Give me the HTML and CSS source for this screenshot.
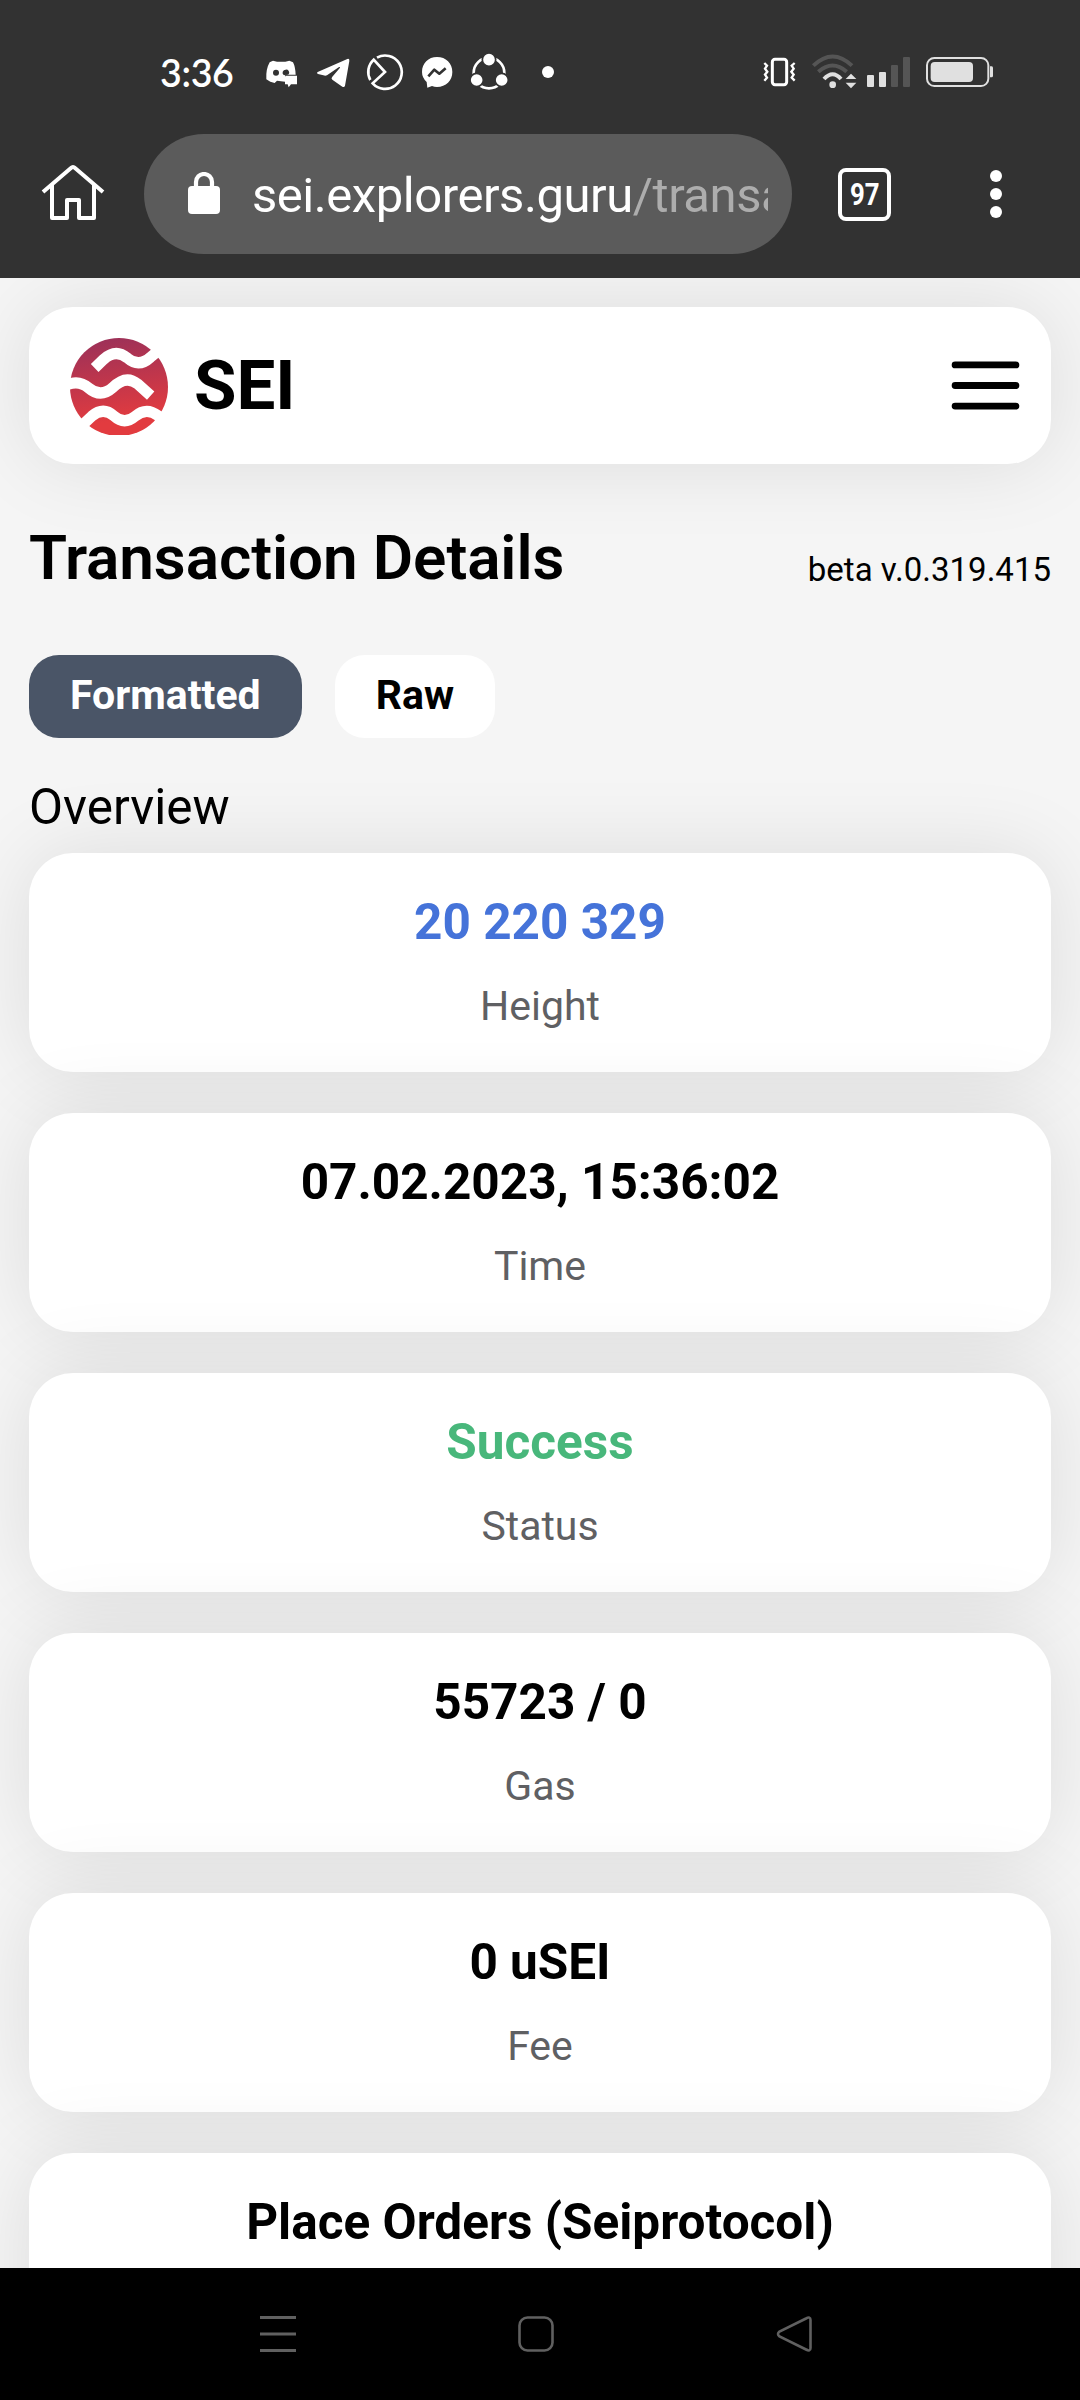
FILE: index.html
```html
<!DOCTYPE html>
<html lang="en">
<head>
<meta charset="utf-8">
<title>SEI - Transaction Details</title>
<link rel="stylesheet" href="styles.css">
</head>
<body>
<div class="screen">
  <div class="browser">
    <div class="status">
      <span class="clock">3:36</span>
      <svg class="sicon" viewBox="375 30 150 135"><path fill="#fff" fill-rule="evenodd" d="M399 62L411 65H436L448 62L459 67Q466 80 467 104H439Q435 104 435 108V125L411 122L404 129L391 125L379 118Q377 88 389 67ZM408 89A9 9 0 1 0 408 107A9 9 0 1 0 408 89ZM437 89A9 9 0 0 0 430 104L435 106L446 103A9 9 0 0 0 437 89Z"/><path fill="#fff" d="M439 107H471V133H453L446 142L443 133H435V111Q435 107 439 107Z"/></svg>
      <svg class="sicon" viewBox="525 30 150 135"><path fill="#fff" d="M533 96L622 57Q629 55 628 63L615 137Q613 143 607 140L577 119Q572 115 577 110L600 83Q601 79 596 82L561 106Q556 108 550 106L534 102Q528 99 533 96Z"/></svg>
      <svg class="sicon" viewBox="675 30 150 135"><g fill="none" stroke="#fff" stroke-width="8"><path d="M711 53A50 50 0 1 1 698 130L735 96L701 59A50 50 0 0 0 691 120"/></g></svg>
      <svg class="sicon" viewBox="825 30 150 135"><path fill="#fff" d="M891 51C865 51 846 70 846 96Q846 113 860 126L862 143L876 138Q883 141 891 141C918 141 937 122 937 96C937 70 918 51 891 51Z"/><path d="M865 109L883 89L898 101L917 85" fill="none" stroke="#323232" stroke-width="8" stroke-linejoin="round"/></svg>
      <svg class="sicon" viewBox="975 30 150 135"><circle cx="1047" cy="99" r="46" fill="none" stroke="#fff" stroke-width="8"/><g fill="#fff" stroke="#323232" stroke-width="5"><circle cx="1047" cy="59" r="20"/><circle cx="1010" cy="120" r="20"/><circle cx="1085" cy="120" r="20"/></g></svg>
      <svg class="sicon" viewBox="1125 30 150 135"><circle cx="1224" cy="96" r="18" fill="#fff"/></svg>
      <span class="spacer"></span>
      <svg class="sicon" viewBox="60 30 150 135"><g fill="none" stroke="#fff"><rect x="97" y="58" width="43" height="76" rx="8" stroke-width="9"/><path stroke-width="7" d="M73 69L81 77L75 86L82 95L75 104L81 113L73 122M164 69L155 77L161 86L154 95L161 104L155 113L164 122"/></g></svg>
      <svg class="sicon" viewBox="210 30 150 135"><g fill="none" stroke-width="12"><path stroke="#555" d="M220 77Q278 22 336 77M235 95Q278 58 320 95"/><path stroke="#e0e0e0" d="M252 117Q278 88 303 117"/></g><g fill="#e0e0e0"><circle cx="278" cy="134" r="10"/><path d="M317 117L333 101L349 117ZM317 128H349L333 145Z"/></g></svg>
      <svg class="signal" viewBox="360 30 180 135"><g fill="#e0e0e0"><rect x="381" y="105" width="21" height="36" rx="3"/><rect x="417" y="96" width="21" height="45" rx="3"/><g fill="#555"><rect x="453" y="75" width="21" height="66" rx="3"/><rect x="489" y="51" width="21" height="90" rx="3"/></g></g></svg>
      <svg class="battery" viewBox="540 30 240 135"><rect x="561" y="54" width="184" height="84" rx="22" fill="none" stroke="#e0e0e0" stroke-width="6"/><rect x="572" y="66" width="127" height="60" rx="12" fill="#e0e0e0"/><path d="M750 79H755Q759 79 759 84V107Q759 112 755 112H750Z" fill="#e0e0e0"/></svg>
    </div>
    <div class="toolbar">
      <svg class="home" viewBox="0 0 64 60"><g fill="none" stroke="#fff" stroke-width="4" stroke-linejoin="round"><path d="M2 28L30 4Q32 2 34 4L62 28"/><path d="M11 21V54H26V36H38V54H53V21"/></g></svg>
      <div class="address">
        <svg class="lock" viewBox="0 0 32 42"><rect y="14" width="32" height="28" rx="4" fill="#fff"/><path d="M8 15V10A8 8 0 0 1 24 10V15" fill="none" stroke="#fff" stroke-width="4.2"/></svg>
        <div class="url">sei.explorers.guru<span class="path">/transa</span></div>
      </div>
      <div class="tabs-count"><span>97</span></div>
      <svg class="dots" viewBox="0 0 12 50"><g fill="#fff"><circle cx="6" cy="7" r="6"/><circle cx="6" cy="25" r="6"/><circle cx="6" cy="43" r="6"/></g></svg>
    </div>
  </div>

  <main class="page">
    <header class="site-header">
      <svg class="logo" viewBox="210 144 294 291">
        <defs><linearGradient id="sei" x1="0" y1="0" x2="0.15" y2="1"><stop offset="0" stop-color="#98305a"/><stop offset="0.9" stop-color="#e23b3f"/></linearGradient><clipPath id="disc"><rect x="205" y="140" width="300" height="295"/></clipPath></defs>
        <circle cx="357" cy="291" r="147" fill="url(#sei)" clip-path="url(#disc)"/>
        <g fill="none" stroke="#fff" stroke-width="33"><path d="M284 234L311 208Q347 175 382 204Q416 234 451 202L475 182"/><path d="M196 287Q235 267 266 294Q302 325 338 293Q378 253 413 282L452 317"/><path d="M244 408L276 378Q310 349 342 378Q373 406 405 379Q439 350 474 377L492 395"/></g>
      </svg>
      <span class="brand">SEI</span>
      <svg class="menu" viewBox="0 0 69 50"><path d="M3.500 4H65.500M3.500 25H65.500M3.500 46H65.500" stroke="#000" stroke-width="7" stroke-linecap="round"/></svg>
    </header>

    <div class="title-row">
      <h1 class="title">Transaction Details</h1>
      <span class="version">beta v.0.319.415</span>
    </div>
    <div class="view-switch">
      <button class="view active">Formatted</button>
      <button class="view">Raw</button>
    </div>
    <h2 class="section">Overview</h2>
    <div class="cards">
      <div class="card"><div class="value link">20 220 329</div><div class="label">Height</div></div>
      <div class="card"><div class="value">07.02.2023, 15:36:02</div><div class="label">Time</div></div>
      <div class="card"><div class="value ok">Success</div><div class="label">Status</div></div>
      <div class="card"><div class="value">55723 / 0</div><div class="label">Gas</div></div>
      <div class="card"><div class="value">0 uSEI</div><div class="label">Fee</div></div>
      <div class="card"><div class="value">Place Orders (Seiprotocol)</div></div>
    </div>
  </main>

  <nav class="navbar">
    <svg class="nav-icon" viewBox="0 0 40 40"><path d="M2 3.500H38M2 20H38M2 36.500H38" stroke="#606060" stroke-width="3.200"/></svg>
    <svg class="nav-icon" viewBox="0 0 40 40"><rect x="3.500" y="3.500" width="33" height="33" rx="8" fill="none" stroke="#606060" stroke-width="2.600"/></svg>
    <svg class="nav-icon" viewBox="0 0 40 40"><path d="M32 4.500Q36.500 2 36.500 6V34Q36.500 38 32 35.500L5.500 22.500Q2.500 20 5.500 17.500Z" fill="none" stroke="#606060" stroke-width="2.600"/></svg>
  </nav>
</div>
</body>
</html>
```
FILE: styles.css
```css
* { box-sizing: border-box; }
body { margin: 0; font-family: Roboto, "Liberation Sans", sans-serif; color: #000; }
svg { display: block; flex: none; }
.screen { width: 1080px; height: 2400px; display: flex; flex-direction: column; overflow: hidden; background: #f5f5f5; }

.browser { height: 278px; flex: none; background: #323232; position: relative; z-index: 1; }
.status { display: flex; height: 134px; padding: 50px 80px 0 140px; }
.clock { width: 125px; padding-left: 20px; font: 600 37.500px/45px Lato, sans-serif; letter-spacing: -0.300px; color: #fff; }
.sicon { width: 50px; height: 45px; }
.spacer { flex: 1; }
.signal { width: 60px; height: 45px; }
.battery { width: 80px; height: 45px; }

.toolbar { display: flex; align-items: center; height: 120px; padding-left: 41px; }
.home { width: 64px; height: 60px; }
.address { display: flex; align-items: center; width: 648px; height: 120px; margin-left: 39px; padding-left: 44px; border-radius: 60px; background: #5b5b5b; }
.lock { width: 32px; height: 42px; margin-top: -3px; }
.url { width: 516px; margin-left: 32px; padding-top: 3px; overflow: hidden; white-space: nowrap; font-size: 49px; line-height: 58px; letter-spacing: -0.450px; color: #fff; }
.path { color: #adadad; }
.tabs-count { display: flex; align-items: center; justify-content: center; width: 53px; height: 53px; margin-left: 46px; border: 4px solid #fff; border-radius: 8px; color: #fff; font-weight: 700; font-size: 31px; line-height: 45px; }
.tabs-count span { transform: scaleX(0.83); }
.dots { width: 12px; height: 50px; margin-left: 99px; }

.page { flex: 1; min-height: 0; overflow: hidden; padding: 29px 29px 0; }
.site-header { display: flex; align-items: center; height: 157px; padding: 0 31px 0 41px; border-radius: 44px; background: #fff; box-shadow: 0 0 82px rgba(0, 0, 0, 0.1); }
.logo { width: 98px; height: 97px; margin-top: 1px; }
.brand { flex: 1; margin-left: 26px; font-weight: 700; font-size: 69px; line-height: 80px; }
.menu { width: 69px; height: 49px; }

.title-row { display: flex; justify-content: space-between; padding-top: 58px; }
.title { margin: 0; font-weight: 600; font-size: 62px; line-height: 72px; letter-spacing: -0.080px; }
.version { margin-top: 28px; font-size: 33px; line-height: 40px; }
.view-switch { display: flex; gap: 33px; margin-top: 61px; }
.view { height: 83px; padding: 0 41px 3px; border: 0; border-radius: 30px; background: #fff; color: #000; font: 700 41px/80px Roboto, sans-serif; }
.view.active { background: #4a5567; color: #fff; }
.section { margin: 40px 0 17px; font-weight: 400; font-size: 49.500px; line-height: 58px; }
.cards { display: flex; flex-direction: column; gap: 41px; }
.card { flex: none; height: 219px; padding-top: 39px; border-radius: 44px; background: #fff; box-shadow: 0 0 82px rgba(0, 0, 0, 0.1); text-align: center; }
.value { font-weight: 700; font-size: 49.500px; line-height: 60px; }
.value.link { color: #4573d9; }
.value.ok { color: #48b77b; }
.label { margin-top: 30px; font-size: 41px; line-height: 48px; color: #5f6063; }

.navbar { display: flex; flex: none; align-items: center; gap: 218px; height: 132px; padding-left: 258px; background: #000; position: relative; z-index: 1; }
.nav-icon { width: 40px; height: 40px; }
```
